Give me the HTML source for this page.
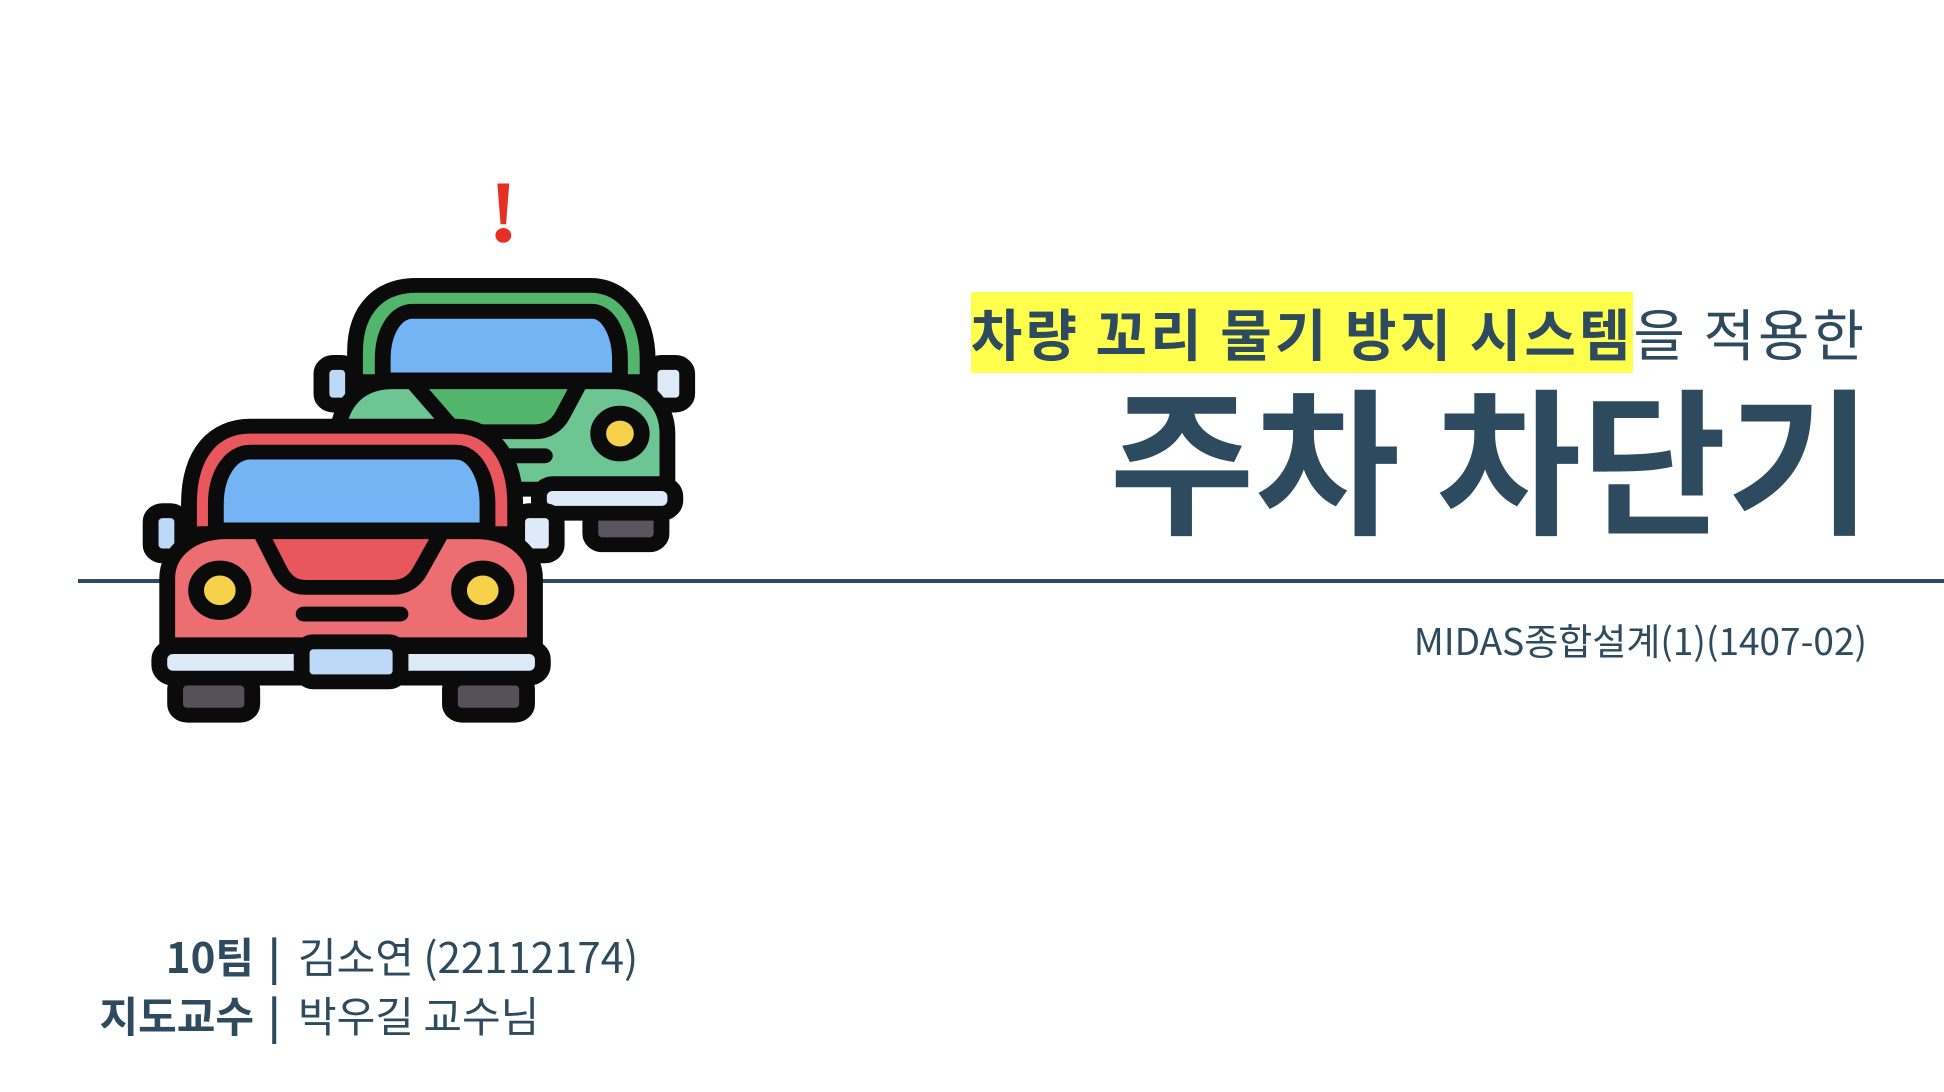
<!DOCTYPE html>
<html><head><meta charset="utf-8"><style>
html,body{margin:0;padding:0;background:#fff;}
body{width:1944px;height:1092px;position:relative;overflow:hidden;font-family:"Liberation Sans","Noto Sans CJK KR",sans-serif;color:#2d4a5f;}
.line{position:absolute;left:78px;top:579px;width:1866px;height:4px;background:#2d4a5f;}
.sub{position:absolute;right:77px;top:296px;font-size:56px;line-height:74px;letter-spacing:3px;white-space:nowrap;font-family:"Noto Sans CJK KR",sans-serif;}
.sub b{background:#ffff4d;font-weight:700;}
.sub span{font-weight:400;}
.title{position:absolute;right:72px;top:354px;font-size:158px;line-height:200px;font-weight:700;white-space:nowrap;font-family:"Noto Sans CJK KR",sans-serif;}
.code{position:absolute;right:77px;top:614px;font-size:37px;line-height:50px;white-space:nowrap;font-family:"Noto Sans CJK KR",sans-serif;}
.row{position:absolute;left:0;height:59px;font-size:42px;line-height:59px;white-space:nowrap;font-family:"Noto Sans CJK KR",sans-serif;}
.row .l{position:absolute;right:-254px;width:400px;text-align:right;font-weight:700;left:-146px;}
.row .p{position:absolute;left:268px;font-weight:700;}
.row .t{position:absolute;left:298px;}
</style></head><body>
<div class="line"></div>
<svg style="position:absolute;left:100px;top:152px" width="620" height="578" viewBox="0 0 1568 1560" preserveAspectRatio="none">
<g stroke="#0b0b0b" stroke-width="40" stroke-linejoin="round" stroke-linecap="round">
<path d="M1005,85 L1035,85 L1027,195 L1013,195 Z" fill="#e63025" stroke="none"/>
<circle cx="1020" cy="225" r="20" fill="#e63025" stroke="none"/>
<rect x="560" y="568" width="80" height="115" rx="30" fill="#bcdaf7"/>
<rect x="1390" y="568" width="95" height="115" rx="30" fill="#deeaf8"/>
<rect x="1240" y="960" width="180" height="100" rx="30" fill="#595460"/>
<path d="M645,620 L645,540 C645,420 710,360 800,360 L1240,360 C1330,360 1385,450 1385,560 L1385,620 Z" fill="#52b56c"/>
<path d="M715,615 L715,560 C715,480 750,430 790,430 L1245,430 C1285,430 1315,490 1315,560 L1315,615 Z" fill="#74b4f5"/>
<path d="M600,760 C610,670 660,620 740,620 L1300,620 C1380,620 1435,680 1435,760 L1435,910 L600,910 Z" fill="#6cc592"/>
<path d="M790,620 L1215,620 L1170,710 C1155,740 1130,755 1100,755 L900,755 Z" fill="#52b56c"/>
<circle cx="1315" cy="760" r="55" fill="#f5d24a"/>
<line x1="1010" y1="820" x2="1125" y2="820"/>
<rect x="1110" y="895" width="345" height="80" rx="35" fill="#deeaf8"/>
<rect x="128" y="968" width="80" height="122" rx="30" fill="#bcdaf7"/>
<rect x="1055" y="968" width="100" height="122" rx="30" fill="#deeaf8"/>
<rect x="190" y="1420" width="195" height="100" rx="30" fill="#55505a"/>
<rect x="885" y="1420" width="195" height="100" rx="30" fill="#55505a"/>
<path d="M225,1030 L225,950 C225,810 290,740 380,740 L900,740 C990,740 1050,820 1050,950 L1050,1030 Z" fill="#e9575e"/>
<path d="M293,1020 L293,950 C293,870 330,810 380,810 L900,810 C950,810 980,880 980,950 L980,1020 Z" fill="#74b4f5"/>
<path d="M170,1330 L170,1150 C170,1080 230,1025 320,1025 L950,1025 C1040,1025 1100,1080 1100,1150 L1100,1330 Z" fill="#ec6d72"/>
<path d="M405,1025 L865,1025 L810,1130 C795,1160 770,1175 740,1175 L520,1175 C490,1175 470,1160 455,1130 Z" fill="#e9575e"/>
<circle cx="303" cy="1183" r="60" fill="#f5d24a"/>
<circle cx="968" cy="1183" r="60" fill="#f5d24a"/>
<line x1="515" y1="1247" x2="760" y2="1247"/>
<rect x="150" y="1335" width="970" height="85" rx="35" fill="#deeaf8"/>
<rect x="510" y="1322" width="250" height="108" rx="30" fill="#bcdaf7"/>
</g>
</svg>
<div class="sub"><b>차량 꼬리 물기 방지 시스템</b><span>을 적용한</span></div>
<div class="title">주차 차단기</div>
<div class="code">MIDAS종합설계(1)(1407-02)</div>
<div class="row" style="top:926px"><span class="l">10팀</span><span class="p">|</span><span class="t">김소연 (22112174)</span></div>
<div class="row" style="top:985px"><span class="l">지도교수</span><span class="p">|</span><span class="t">박우길 교수님</span></div>
</body></html>
